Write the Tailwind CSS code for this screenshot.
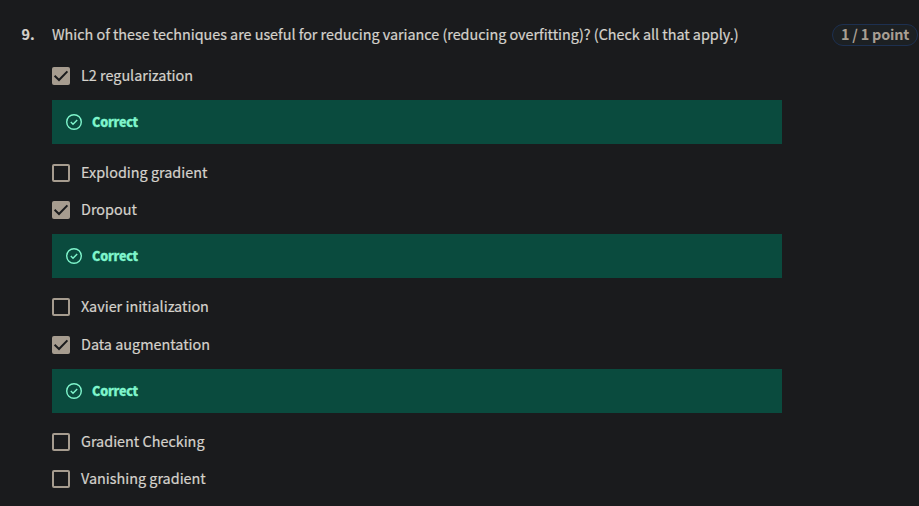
<!DOCTYPE html>
<html lang="en">
<head>
<meta charset="utf-8">
<title>Quiz question 9</title>
<script src="https://cdn.jsdelivr.net/npm/@tailwindcss/browser@4"></script>
</head>
<body class="bg-[#1a1b1d] text-[#d5d2cc] font-['Noto_Sans_CJK_SC','Open_Sans',sans-serif] text-[14.4px] leading-6 overflow-hidden">
<svg class="hidden">
  <symbol id="tick" viewBox="0 0 18 18"><path d="M2.6 8.8 7 13 15.4 4.4" fill="none" stroke="#1a1b1d" stroke-width="2"/></symbol>
  <symbol id="ok" viewBox="0 0 16 16"><circle cx="8" cy="8" r="7.3" fill="none" stroke="#7ff5cc" stroke-width="1.4"/><path d="M4.8 8.1 7 10.2 11.2 5.9" fill="none" stroke="#7ff5cc" stroke-width="1.4"/></symbol>
</svg>
<main class="h-[506px] pt-[22px] whitespace-nowrap [-webkit-text-stroke:0.2px]">
  <header class="flex items-start h-[39px]">
    <span class="w-[52px] pl-[21.5px] font-bold">9.</span>
    <h1 class="w-[780px] tracking-[-0.03px]">Which of these techniques are useful for reducing variance (reducing overfitting)? (Check all that apply.)</h1>
    <span class="mt-[2px] flex h-[22px] w-[86px] shrink-0 items-center justify-center rounded-full border border-[#1d3050] bg-[#1c2023] pb-[2px] font-bold tracking-[-0.2px] text-[#a89f93] [-webkit-text-stroke:0px]">1 / 1 point</span>
  </header>
  <section class="ml-[52px] w-[730px]">
    <div class="flex h-[30px] items-center gap-[11px]"><span class="size-[18px] rounded-[2px] bg-[#a69c8f]"><svg class="size-[18px]"><use href="#tick"/></svg></span><span class="pb-[2px]">L2 regularization</span></div>
    <div class="mt-[9px] flex h-11 items-center gap-[10px] bg-[#0a4b3e] pl-[14px] text-[12.5px] font-black tracking-[-0.2px] text-[#7ff5cc] [-webkit-text-stroke:0.3px]"><svg class="size-4"><use href="#ok"/></svg><span class="pb-px">Correct</span></div>
    <div class="mt-[14px] flex h-[30px] items-center gap-[11px]"><span class="size-[18px] rounded-[2px] border-2 border-[#a69c8f]"></span><span class="pb-[2px]">Exploding gradient</span></div>
    <div class="mt-[7px] flex h-[30px] items-center gap-[11px]"><span class="size-[18px] rounded-[2px] bg-[#a69c8f]"><svg class="size-[18px]"><use href="#tick"/></svg></span><span class="pb-[2px]">Dropout</span></div>
    <div class="mt-[9px] flex h-11 items-center gap-[10px] bg-[#0a4b3e] pl-[14px] text-[12.5px] font-black tracking-[-0.2px] text-[#7ff5cc] [-webkit-text-stroke:0.3px]"><svg class="size-4"><use href="#ok"/></svg><span class="pb-px">Correct</span></div>
    <div class="mt-[14px] flex h-[30px] items-center gap-[11px]"><span class="size-[18px] rounded-[2px] border-2 border-[#a69c8f]"></span><span class="pb-[2px]">Xavier initialization</span></div>
    <div class="mt-[8px] flex h-[30px] items-center gap-[11px]"><span class="size-[18px] rounded-[2px] bg-[#a69c8f]"><svg class="size-[18px]"><use href="#tick"/></svg></span><span class="pb-[2px]">Data augmentation</span></div>
    <div class="mt-[9px] flex h-11 items-center gap-[10px] bg-[#0a4b3e] pl-[14px] text-[12.5px] font-black tracking-[-0.2px] text-[#7ff5cc] [-webkit-text-stroke:0.3px]"><svg class="size-4"><use href="#ok"/></svg><span class="pb-px">Correct</span></div>
    <div class="mt-[14px] flex h-[30px] items-center gap-[11px]"><span class="size-[18px] rounded-[2px] border-2 border-[#a69c8f]"></span><span class="pb-[2px]">Gradient Checking</span></div>
    <div class="mt-[7px] flex h-[30px] items-center gap-[11px]"><span class="size-[18px] rounded-[2px] border-2 border-[#a69c8f]"></span><span class="pb-[2px]">Vanishing gradient</span></div>
  </section>
</main>
</body>
</html>
